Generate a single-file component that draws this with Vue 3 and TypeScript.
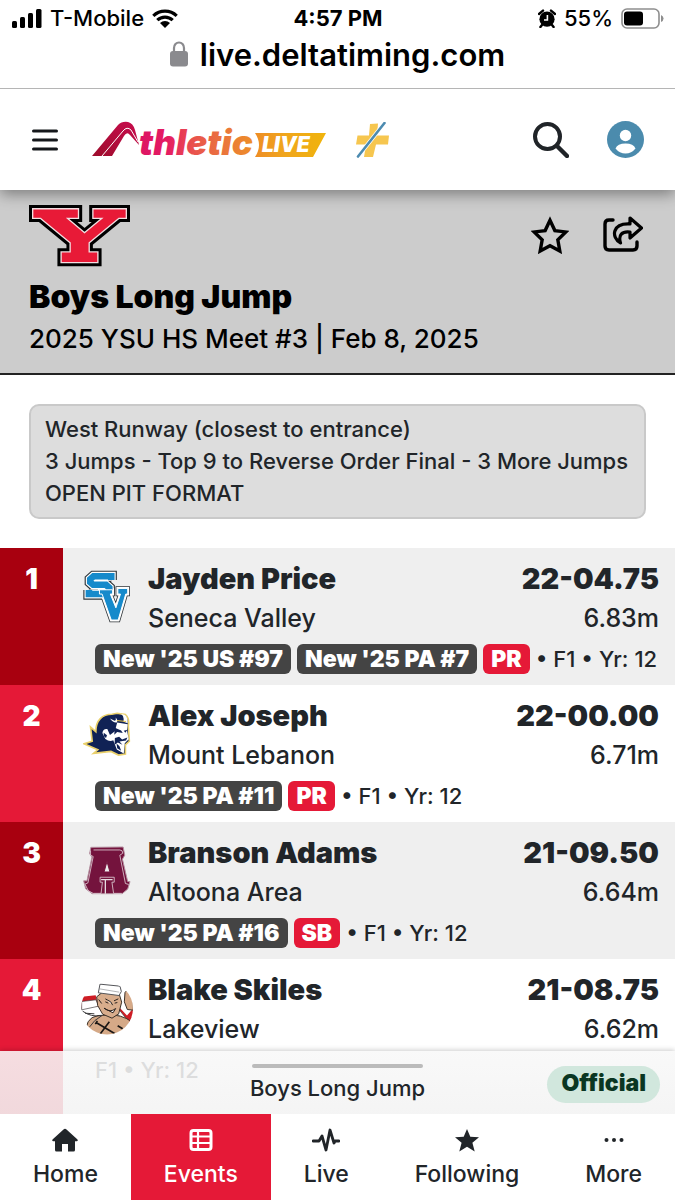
<script setup lang="ts">
type Emblem = 'sv' | 'devil' | 'block-a' | 'sailor'

interface Tag {
  text: string
  kind: 'rank' | 'best'
}

interface Result {
  place: number
  name: string
  school: string
  mark: string
  metric: string
  emblem: Emblem
  tags: Tag[]
  details: string[]
}

const notes: string[] = [
  'West Runway (closest to entrance)',
  '3 Jumps - Top 9 to Reverse Order Final - 3 More Jumps',
  'OPEN PIT FORMAT',
]

const results: Result[] = [
  {
    place: 1, name: 'Jayden Price', school: 'Seneca Valley', mark: '22-04.75', metric: '6.83m', emblem: 'sv',
    tags: [
      { text: "New '25 US #97", kind: 'rank' },
      { text: "New '25 PA #7", kind: 'rank' },
      { text: 'PR', kind: 'best' },
    ],
    details: ['F1', 'Yr: 12'],
  },
  {
    place: 2, name: 'Alex Joseph', school: 'Mount Lebanon', mark: '22-00.00', metric: '6.71m', emblem: 'devil',
    tags: [
      { text: "New '25 PA #11", kind: 'rank' },
      { text: 'PR', kind: 'best' },
    ],
    details: ['F1', 'Yr: 12'],
  },
  {
    place: 3, name: 'Branson Adams', school: 'Altoona Area', mark: '21-09.50', metric: '6.64m', emblem: 'block-a',
    tags: [
      { text: "New '25 PA #16", kind: 'rank' },
      { text: 'SB', kind: 'best' },
    ],
    details: ['F1', 'Yr: 12'],
  },
  {
    place: 4, name: 'Blake Skiles', school: 'Lakeview', mark: '21-08.75', metric: '6.62m', emblem: 'sailor',
    tags: [],
    details: ['F1', 'Yr: 12'],
  },
]

const tabs = [
  { id: 'home', label: 'Home' },
  { id: 'events', label: 'Events' },
  { id: 'live', label: 'Live' },
  { id: 'following', label: 'Following' },
  { id: 'more', label: 'More' },
]
const activeTab = 'events'

function detailLine(result: Result): string {
  const line = result.details.join(' • ')
  return result.tags.length ? `• ${line}` : line
}
</script>

<template>
  <div class="screen">
    <div class="status">
      <div class="status-side">
        <svg class="signal" viewBox="0 0 30 19" aria-hidden="true">
          <rect x="0" y="12" width="5" height="7" rx="1.5" />
          <rect x="8" y="8" width="5" height="11" rx="1.5" />
          <rect x="16" y="4" width="5" height="15" rx="1.5" />
          <rect x="24" y="0" width="5.5" height="19" rx="1.5" />
        </svg>
        <span>T-Mobile</span>
        <svg class="wifi" viewBox="0 0 26 19" aria-hidden="true">
          <path d="M1.3 6.8a17 17 0 0 1 23.4 0M5.3 11.2a11 11 0 0 1 15.4 0" fill="none" stroke="#000" stroke-width="3.2" />
          <path d="M8 14a7.4 7.4 0 0 1 10 0L13 19z" />
        </svg>
      </div>
      <strong class="clock">4:57 PM</strong>
      <div class="status-side status-right">
        <svg class="alarm" viewBox="0 0 18 19" aria-hidden="true">
          <circle cx="9" cy="10.2" r="7.6" />
          <path d="M1 5 5 1.6M17 5l-4-3.400M4 16l-1.600 2M14 16l1.600 2" stroke="#000" stroke-width="2.400" stroke-linecap="round" />
          <path d="M9.400 6v5H6" fill="none" stroke="#fff" stroke-width="1.600" />
        </svg>
        <span>55%</span>
        <svg class="battery" viewBox="0 0 43 21" aria-hidden="true">
          <rect x="1" y="1" width="37" height="19" rx="5" fill="#fff" stroke="#8e8e8e" stroke-width="1.600" />
          <rect x="3" y="3.500" width="19" height="14" rx="3" />
          <path d="M40 7v7q2.500-1 2.500-3.500T40 7" fill="#8e8e8e" />
        </svg>
      </div>
    </div>

    <div class="address">
      <svg class="lock" viewBox="0 0 18 26" aria-hidden="true">
        <rect x="0" y="10" width="18" height="15.500" rx="3" fill="#8a8a8e" />
        <path d="M4 11V7a5 5.500 0 0 1 10 0v4" fill="none" stroke="#8a8a8e" stroke-width="2.200" />
      </svg>
      <span>live.deltatiming.com</span>
    </div>

    <header class="masthead">
      <button class="icon-button menu" type="button" aria-label="Menu">
        <svg viewBox="0 0 26 24"><path d="M1.500 3h23M1.500 12h23M1.500 21h23" stroke="#15181b" stroke-width="3" stroke-linecap="round" /></svg>
      </button>
      <a class="brand" href="#">
        <svg viewBox="0 0 236 48" role="img" aria-label="AthleticLIVE">
          <defs>
            <linearGradient id="word" gradientUnits="userSpaceOnUse" x1="46" y1="0" x2="166" y2="0">
              <stop offset="0" stop-color="#dc1464" />
              <stop offset=".25" stop-color="#e51c62" />
              <stop offset=".45" stop-color="#e9504f" />
              <stop offset=".7" stop-color="#ea743d" />
              <stop offset="1" stop-color="#ee9325" />
            </linearGradient>
            <linearGradient id="ribbon" x1="0" y1="0" x2="1" y2="0">
              <stop offset="0" stop-color="#ee8d25" />
              <stop offset=".4" stop-color="#f0a51d" />
              <stop offset="1" stop-color="#f0b40c" />
            </linearGradient>
            <linearGradient id="peak" x1="0" y1="1" x2="1" y2="0">
              <stop offset="0" stop-color="#9d0d2c" />
              <stop offset="1" stop-color="#c90c4e" />
            </linearGradient>
          </defs>
          <path d="M0 40 26 9Q30 5 36 6 41 7 43 14L47 29 38 19Q35 15 32 20L20 40Z" fill="url(#peak)" />
          <path d="M10 40 31 15Q35 10 39 14L46 26" fill="none" stroke="#fff" stroke-width="1" />
          <path d="M163 17h71l-13 24h-58q8-12 0-24" fill="url(#ribbon)" />
          <text class="word" x="47" y="39" fill="url(#word)">thletic</text>
          <text class="live-word" x="170" y="36" fill="#fff">LIVE</text>
        </svg>
      </a>
      <svg class="plus" viewBox="0 0 34 36" aria-hidden="true">
        <path d="m14 2 8-.5-1 12h12l-1 9H20l-3 12.500H8l2-12.500H0l1.500-9H13z" fill="#f6c64f" />
        <path d="M2 34.500 28.500 1" stroke="#fff" stroke-width="4" />
        <path d="M2 34.500 28.500 1" stroke="#4c8bb0" stroke-width="2.600" stroke-linecap="round" />
      </svg>
      <div class="masthead-actions">
        <button class="icon-button find" type="button" aria-label="Search">
          <svg viewBox="0 0 36 36"><circle cx="14.500" cy="14.500" r="12.500" fill="none" stroke="#202428" stroke-width="4" /><path d="m24 24 10 10" stroke="#202428" stroke-width="4.400" stroke-linecap="round" /></svg>
        </button>
        <button class="icon-button account" type="button" aria-label="Account">
          <svg viewBox="0 0 37 37"><circle cx="18.500" cy="18.500" r="18.500" fill="#4b8bad" /><circle cx="18.500" cy="14.500" r="5.700" fill="#fff" /><path d="M8.500 27.500q2-5 10-5t10 5q-4 5-10 5t-10-5" fill="#fff" /></svg>
        </button>
      </div>
    </header>

    <section class="event">
      <div>
        <svg class="meet-logo" viewBox="87 45 302 185" role="img" aria-label="YSU">
          <defs>
            <path id="ysu" d="M100 58H233V83H197L253 130 310 83H280V58H376V83H355L265 157V187H291V215H185V187H212V157L122 83H100Z" />
          </defs>
          <use href="#ysu" fill="#000" stroke="#000" stroke-width="26" />
          <use href="#ysu" fill="#fff" stroke="#f2dfe2" stroke-width="8" />
          <use href="#ysu" fill="#e81a37" />
        </svg>
        <h1>Boys Long Jump</h1>
        <p>2025 YSU HS Meet #3 | Feb 8, 2025</p>
      </div>
      <div class="event-actions">
        <button class="icon-button favorite" type="button" aria-label="Follow event">
          <svg viewBox="0 0 36 36"><path d="m18 4 4.600 9.800 10.400 1.300-7.600 7.400 1.900 10.700L18 28.200 8.700 33.200l1.900-10.700L3 15.100l10.400-1.300z" fill="none" stroke="#000" stroke-width="3.200" /></svg>
        </button>
        <button class="icon-button share" type="button" aria-label="Share">
          <svg viewBox="0 0 40 36" fill="none" stroke="#000" stroke-width="3.400" stroke-linecap="round" stroke-linejoin="round">
            <path d="M10 4H6q-4 0-4 4v22q0 4 4 4h24q4 0 4-4v-4" />
            <path d="M27 2 38.500 12 27 22v-6c-8-1-12 3-9.500 11-10-6-8-20 9.500-19z" stroke-width="3.200" />
          </svg>
        </button>
      </div>
    </section>

    <main class="content">
      <div class="notes">
        <p v-for="note in notes" :key="note">{{ note }}</p>
      </div>

      <ol class="results">
        <li v-for="result in results" :key="result.place" class="result">
          <div class="place">{{ result.place }}</div>
          <div class="entry">
            <div class="entry-main">
              <svg v-if="result.emblem === 'sv'" class="emblem" viewBox="24 28 146 164" aria-hidden="true">
                <defs>
                  <path id="s-mark" d="M110 58V47H56L46 56V65L55 73H94L104 82V92L94 101H42V89" />
                  <path id="v-mark" d="M74 88H114V101H107L124 143 138 101H130V84H160V101H154L131 180H110L82 101H74Z" />
                </defs>
                <g stroke="#30363a" fill="none"><use href="#s-mark" stroke-width="34" /><use href="#v-mark" stroke-width="14" /></g>
                <g fill="none" stroke="#fff"><use href="#s-mark" stroke-width="27" /><use href="#v-mark" fill="#fff" stroke-width="9" /></g>
                <use href="#s-mark" fill="none" stroke="#168acb" stroke-width="20" />
                <use href="#v-mark" fill="#168acb" stroke="#fff" stroke-width="3" />
              </svg>
              <svg v-else-if="result.emblem === 'devil'" class="emblem" viewBox="247 56 146 146" aria-hidden="true">
                <path d="M250 159 275 151 270 108 286 122C286 87 306 69 335 69L351 66 376 70Q389 82 385 104L388 151 376 162V190L355 193 332 182 279 188 292 177Z" fill="#102255" stroke="#ead06a" stroke-width="5" />
                <path d="M351 94 383 99 381 118 386 145 374 157 371 188 350 176 339 148Q328 154 315 144L306 126Q308 112 321 114L329 132 344 121Z" fill="#fff" />
                <path d="M329 82q10 14 21 12 4-8-4-15 3 9-3 10zM359 67q14 4 11 25l13 4q1-18-8-25z" fill="#fff" />
                <path d="m344 110 19 8 5 8-17-3-9 8zM371 119l11-3-6 9zM344 141l13-4 9 9 16-6-4 9-20 3 9 10-14-7-10 7zM310 125l10 8-3 8-7-6zM349 158l9 8 5 14-12-8z" fill="#102255" />
                <path d="m350 88 28 3" stroke="#e8c449" stroke-width="3" />
              </svg>
              <svg v-else-if="result.emblem === 'block-a'" class="emblem" viewBox="248 467 146 150" aria-hidden="true">
                <path d="m272 470 98-1 5 25-7 12 16 68h7l-7 23-17 14H276l-20-15-6-24h10l15-72-7-11z" fill="#74133d" stroke="#b591a1" stroke-width="3" />
                <path d="M280 478h80q9 0 9 10l-9 6 17 86 10 3M271 480v14l8 4-16 80-9 4 10 20 15 8h24l4-34h-7v-15h43v15h-7l5 34h25" fill="none" stroke="#dcc9d1" stroke-width="2.600" />
                <path d="m321 513-9 32h18z" fill="#ececec" stroke="#74133d" stroke-width="3" />
                <path d="M303 568h35M316 568v43" stroke="#e7dce1" stroke-width="4" />
                <path d="M322 574v34" stroke="#74133d" stroke-width="8" />
              </svg>
              <svg v-else class="emblem wide" viewBox="243 78 156 158" aria-hidden="true">
                <defs><clipPath id="badge"><circle cx="321" cy="157" r="78" /></clipPath></defs>
                <g clip-path="url(#badge)">
                  <path d="M243 78h156v158H243z" fill="#fff" />
                  <path d="m245 122 42-5 8 33-50 7zM350 145l31 33 18-21v45l-21-9-29-31z" fill="#ce1d25" />
                  <path d="m245 136 43-5 8 19-51 11zM349 150l31 39-7 6-27-28z" fill="#fff" stroke="#3c3b3d" stroke-width="2" />
                  <path d="m375 109 9-10 16 22v41l-18-2-9-23z" fill="#d7aa88" stroke="#3c3229" stroke-width="3" />
                  <path d="M259 213q5-39 59-36 46-5 80 22l-33 42H277z" fill="#d5a987" stroke="#3c3229" stroke-width="3" />
                  <path d="m290 122 19-15 47 1 9 30-9 35-20 13-28-12-15-26z" fill="#d8ad8c" stroke="#3c3229" stroke-width="3" />
                  <path d="m300 84 60 6 4 16-7 12-62-8z" fill="#fff" stroke="#55565a" stroke-width="3" />
                  <path d="m298 98 60 10" stroke="#8a8b90" stroke-width="2" />
                  <path d="m316 128 16 9 6 10M342 134l13-6M312 156q19 15 35 1l-8 13zM316 137l9 4M344 141l8-2M296 130l9 12" fill="#fff" stroke="#29211d" stroke-width="3" />
                  <path d="m287 198 58 35M328 197l-28 37M286 204l6-10M353 209l15 9" fill="none" stroke="#1b1715" stroke-width="5" />
                  <path d="M248 165q25 19 58 13-24 13-37 34M255 171l28 2" fill="none" stroke="#3c3b3d" stroke-width="3" />
                </g>
              </svg>
              <div class="athlete">
                <strong>{{ result.name }}</strong>
                <span>{{ result.school }}</span>
              </div>
              <div class="mark">
                <strong>{{ result.mark }}</strong>
                <span>{{ result.metric }}</span>
              </div>
            </div>
            <div class="meta">
              <span v-for="tag in result.tags" :key="tag.text" class="tag" :class="tag.kind">{{ tag.text }}</span>
              <span class="details">{{ detailLine(result) }}</span>
            </div>
          </div>
        </li>
      </ol>

      <div class="sheet">
        <button class="sheet-handle" type="button"><i class="grip"></i>Boys Long Jump</button>
        <span class="official">Official</span>
      </div>
    </main>

    <nav class="tabs">
      <a v-for="tab in tabs" :key="tab.id" href="#" class="tab" :class="{ active: tab.id === activeTab }">
        <svg v-if="tab.id === 'home'" viewBox="0 0 28 24"><path d="M12.500 1.500q1.500-1.400 3 0L26.500 11.500q1 1.500-.7 1.700H24V22q0 1.500-1.500 1.500H17V16h-6v7.500H5.500Q4 23.500 4 22v-8.800H2.200q-1.700-.2-.7-1.700z" /></svg>
        <svg v-else-if="tab.id === 'events'" viewBox="0 0 28 24"><rect x="4" y="2.500" width="20" height="19" rx="2.500" fill="none" stroke="currentColor" stroke-width="3" /><path d="M4 8.500h20M4 15h20M11 3v18" stroke="currentColor" stroke-width="2.200" /></svg>
        <svg v-else-if="tab.id === 'live'" viewBox="0 0 28 24"><path d="M1 13h6l3-5 4 14 4-20 4 13 1-2h4" fill="none" stroke="currentColor" stroke-width="2.800" stroke-linejoin="round" stroke-linecap="round" /></svg>
        <svg v-else-if="tab.id === 'following'" viewBox="0 0 28 24"><path d="m14 1 3.300 7.800 8.700.4-6.600 5.500 2.300 8.800-7.700-4.700-7.700 4.700 2.300-8.800L2 9.200l8.700-.4z" /></svg>
        <svg v-else viewBox="0 0 28 24"><circle cx="6.500" cy="12" r="2" /><circle cx="14" cy="12" r="2" /><circle cx="21.500" cy="12" r="2" /></svg>
        <span>{{ tab.label }}</span>
      </a>
    </nav>
  </div>
</template>

<style>
body {
  background: #fff;
}
</style>

<style scoped>
* {
  box-sizing: border-box;
}

.screen {
  display: flex;
  flex-direction: column;
  height: 100vh;
  overflow: hidden;
  background: #fff;
  color: #212529;
  font-family: Inter, "Liberation Sans", sans-serif;
  font-size: 24px;
  font-weight: 500;
}

h1,
p,
ol {
  margin: 0;
  padding: 0;
}

svg {
  display: block;
}

.icon-button {
  padding: 0;
  border: 0;
  background: none;
}

.status {
  display: flex;
  align-items: center;
  height: 36px;
  padding: 0 11px 0 12px;
  color: #000;
  font-size: 22px;
}

.status-side {
  display: flex;
  flex: 1;
  align-items: center;
  gap: 8px;
}

.status-right {
  justify-content: flex-end;
}

.signal {
  width: 30px;
  height: 19px;
}

.wifi {
  width: 26px;
  height: 19px;
}

.alarm {
  width: 18px;
  height: 19px;
}

.battery {
  width: 43px;
  height: 21px;
}

.clock {
  font-weight: 700;
}

.address {
  position: relative;
  z-index: 2;
  display: flex;
  align-items: center;
  justify-content: center;
  gap: 12px;
  height: 53px;
  padding-bottom: 16px;
  border-bottom: 1px solid #b5b5b5;
  background: #fff;
  color: #000;
  font-size: 31px;
  font-weight: 600;
}

.lock {
  width: 18px;
  height: 26px;
}

.masthead {
  position: relative;
  z-index: 1;
  display: flex;
  align-items: center;
  height: 101px;
  padding: 0 31px 0 32px;
  background: #fff;
  box-shadow: 0 4px 14px rgba(0, 0, 0, 0.4);
}

.menu svg {
  width: 26px;
  height: 24px;
}

.brand {
  margin-left: 34px;
}

.brand svg {
  width: 236px;
  height: 48px;
  overflow: visible;
}

.word {
  font: italic 900 35px Inter, sans-serif;
}

.live-word {
  font: italic 900 21px Inter, sans-serif;
}

.plus {
  width: 34px;
  height: 36px;
  margin-left: 28px;
}

.masthead-actions {
  display: flex;
  gap: 38px;
  margin-left: auto;
}

.find svg {
  width: 36px;
  height: 36px;
}

.account svg {
  width: 37px;
  height: 37px;
}

.event {
  display: flex;
  justify-content: space-between;
  height: 185px;
  padding: 15px 32px 0 29px;
  border-bottom: 2px solid #222;
  background: #ccc;
  color: #000;
}

.meet-logo {
  width: 101px;
  height: 62px;
}

h1 {
  margin-top: 10px;
  font-size: 32px;
  font-weight: 900;
  line-height: 40px;
}

.event p {
  font-size: 26px;
  line-height: 44px;
}

.event-actions {
  display: flex;
  align-items: flex-start;
  gap: 34px;
  padding-top: 11px;
}

.favorite svg {
  width: 38px;
  height: 38px;
}

.share svg {
  width: 40px;
  height: 36px;
}

.content {
  position: relative;
  display: flex;
  flex: 1;
  flex-direction: column;
  min-height: 0;
  overflow: hidden;
}

.notes {
  flex: none;
  margin: 29px;
  padding: 7px 8px 8px 14px;
  border: 2px solid #c9c9c9;
  border-radius: 10px;
  background: #ddd;
  font-size: 22px;
  line-height: 32px;
}

.results {
  display: flex;
  flex: none;
  flex-direction: column;
  list-style: none;
}

.result {
  display: flex;
  height: 137px;
}

.result:last-child {
  height: 160px;
}

.place {
  width: 63px;
  background: #e51937;
  color: #fff;
  font-size: 28px;
  font-weight: 900;
  line-height: 36px;
  padding-top: 13px;
  text-align: center;
}

.entry {
  flex: 1;
  padding: 11px 16px 0 20px;
}

.result:nth-child(odd) .place {
  background: #a8000f;
}

.result:nth-child(odd) .entry {
  background: #efefef;
}

.entry-main {
  display: flex;
}

.emblem {
  width: 48px;
  height: 54px;
  margin-top: 11px;
}

.emblem.wide {
  width: 52px;
  height: 53px;
  margin: 12px -2px 0;
}

.athlete,
.mark {
  display: flex;
  flex-direction: column;
  font-size: 25px;
  line-height: 38px;
}

.athlete {
  flex: 1;
  margin-left: 17px;
}

.mark {
  text-align: right;
}

.athlete strong,
.mark strong {
  font-size: 29px;
  font-weight: 900;
  line-height: 40px;
}

.meta {
  display: flex;
  align-items: center;
  gap: 6px;
  height: 30px;
  margin: 7px 0 0 12px;
  font-size: 22px;
}

.tag {
  height: 30px;
  padding: 0 8px;
  border-radius: 6px;
  background: #444;
  color: #fff;
  font-size: 23px;
  font-weight: 900;
  line-height: 30px;
}

.tag.best {
  background: #e51937;
}

.sheet {
  position: absolute;
  right: 0;
  bottom: 0;
  left: 0;
  display: grid;
  grid-template-columns: 1fr auto 1fr;
  align-items: center;
  height: 63px;
  padding: 3px 15px 0;
  background: linear-gradient(rgba(248, 248, 248, 0.88), rgba(243, 243, 243, 0.88));
  box-shadow: 0 -1px 5px rgba(0, 0, 0, 0.2);
}

.sheet-handle {
  grid-column: 2;
  padding: 0;
  border: 0;
  background: none;
  color: #212529;
  font: 500 22px/32px Inter, "Liberation Sans", sans-serif;
}

.grip {
  display: block;
  height: 4px;
  margin: 0 2px 4px;
  border-radius: 2px;
  background: #bbb;
}

.official {
  justify-self: end;
  height: 37px;
  padding: 0 14px;
  border-radius: 19px;
  background: #d1e7dd;
  color: #0a3622;
  font-size: 23px;
  font-weight: 900;
  line-height: 35px;
}

.tabs {
  position: relative;
  display: flex;
  height: 86px;
  background: #fff;
}

.tab {
  display: flex;
  flex: 1 1 auto;
  flex-direction: column;
  align-items: center;
  gap: 6px;
  padding-top: 14px;
  color: #212529;
  font-size: 23px;
  line-height: 32px;
  text-decoration: none;
}

.tab svg {
  width: 28px;
  height: 24px;
  fill: currentColor;
}

.tab.active {
  background: #e51937;
  color: #fff;
}
</style>
